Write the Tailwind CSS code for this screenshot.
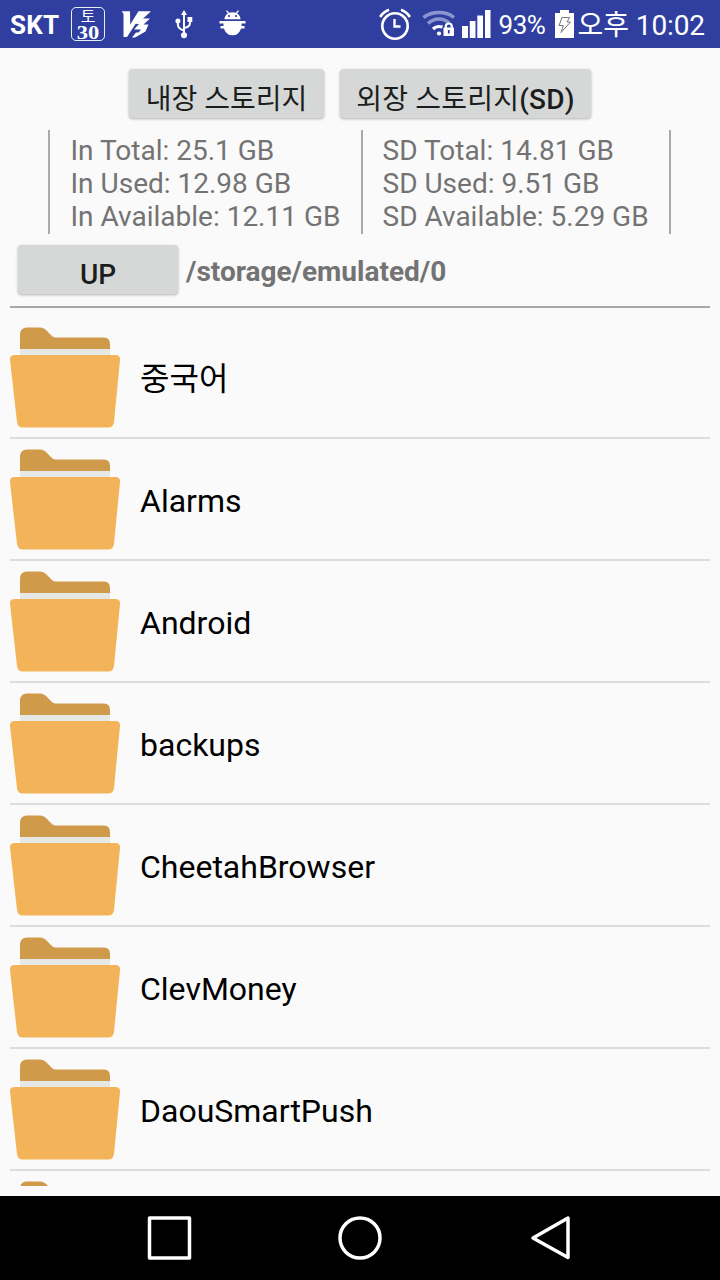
<!DOCTYPE html>
<html lang="ko">
<head>
  <meta charset="UTF-8" />
  <meta name="viewport" content="width=device-width, initial-scale=1" />
  <title>File Manager</title>
  <script src="https://cdn.jsdelivr.net/npm/@tailwindcss/browser@4"></script>
</head>
<body class="flex flex-col w-[720px] h-[1280px] overflow-hidden bg-[#fafafa] font-[Roboto,'Noto_Sans_CJK_KR',sans-serif] whitespace-nowrap">

<!-- Status bar -->
<header class="flex items-center shrink-0 h-12 pl-2.5 pr-[15px] bg-[#303f9f] text-white">
  <span class="w-[61px] text-[26px] leading-[48px] font-bold pt-0.5 tracking-[0.2px]">SKT</span>
  <div class="flex flex-col items-center w-[34px] h-[34px] shrink-0 border border-white/90 rounded-[5px]">
    <div class="h-4 text-[16px] leading-[14px] font-['Noto_Sans_CJK_KR',sans-serif]">토</div>
    <div class="h-4 text-[18px] leading-[18px] font-bold font-['Liberation_Serif',serif] scale-x-125">30</div>
  </div>
  <svg class="ml-4 shrink-0" width="32" height="28" viewBox="0 0 32 28" fill="#fff">
    <path d="M.8 1.200H9L9.200 14.500 17.500 1.200H30L21 9.500 14.500 14 6 27H2.500V4Z"/>
    <path d="M21.500 8.500H29L22.500 14.500H27.500L24.500 21.500 14 27.500H11L15 22.500H17.500L20 19.500H13L18 14H14.500Z"/>
  </svg>
  <svg class="ml-[22px] shrink-0" width="18" height="29" viewBox="0 0 18 29" fill="none" stroke="#fff" stroke-width="2">
    <path d="M9 5V24M9 20.500Q3 18.500 2.900 15V10M9 18Q15 17 15 13V9"/>
    <path d="M9 0L12 5H6Z" fill="#fff" stroke="none"/>
    <circle cx="9" cy="25.300" r="3" fill="#fff" stroke="none"/>
    <circle cx="2.900" cy="11" r="2.500" fill="#fff" stroke="none"/>
    <path d="M12.500 7H17.300V12H12.500Z" fill="#fff" stroke="none"/>
  </svg>
  <svg class="ml-[26px] shrink-0" width="27" height="28" viewBox="0 0 27 28" fill="#fff">
    <path d="M5.500 9.200A7.500 6.800 0 0 1 9 3.500L7 1 8 .2 10.200 2.800A9 9 0 0 1 16.800 2.800L19 .2 20 1 18 3.500A7.500 6.800 0 0 1 21.500 9.200Z"/>
    <path d="M.5 11H26.500V13.500H22.500V16H25.500V18.500H22A8.700 8.700 0 0 1 5 18.500H1.500V16H4.500V13.500H.5Z"/>
    <circle cx="10" cy="6" r="1.100" fill="#303f9f"/>
    <circle cx="17" cy="6" r="1.100" fill="#303f9f"/>
  </svg>

  <!-- Right side -->
  <svg class="ml-auto shrink-0" width="32" height="32" viewBox="0 0 32 32" fill="none" stroke="#fff">
    <circle cx="16" cy="18" r="12.700" stroke-width="2.600"/>
    <path d="M15.500 11V18.500H21.500" stroke-width="2.400"/>
    <path d="M1.200 9Q4 4 10 1.800M30.800 9Q28 4 22 1.800" stroke-width="2.700"/>
  </svg>
  <svg class="ml-[11px] shrink-0" width="34" height="28" viewBox="0 0 34 28" fill="none">
    <path d="M1.500 7.500Q8 2.500 17 2.500T32 7.500" stroke="#8b95cf" stroke-width="3.500"/>
    <path d="M6 13.500Q11 9 17 9T27 13" stroke="#8b95cf" stroke-width="3.500"/>
    <path d="M11 19Q13.500 16.500 17 16.500Q19 16.500 20.500 17" stroke="#fff" stroke-width="3.200"/>
    <circle cx="17" cy="23.500" r="2.100" fill="#fff"/>
    <path d="M23.800 18V16.500A3 3 0 0 1 29.800 16.500V18" stroke="#fff" stroke-width="2.200"/>
    <rect x="21.500" y="17.500" width="10.500" height="8.500" rx=".8" fill="#fff"/>
    <path d="M26.800 20V23.500" stroke="#303f9f" stroke-width="1.800"/>
  </svg>
  <svg class="ml-1.5 shrink-0" width="29" height="28" viewBox="0 0 29 28" fill="#fff">
    <path d="M0 16H6V28H0ZM7.800 11H13.500V28H7.800ZM15.300 5.500H21V28H15.300ZM23 0H28.500V28H23Z"/>
  </svg>
  <span class="ml-2 w-12 text-[26px] leading-[48px] tracking-[-0.5px] pt-0.5">93%</span>
  <svg class="ml-2 shrink-0" width="19" height="28" viewBox="0 0 19 28">
    <path d="M5 0H14V3H19V28H0V3H5Z" fill="#fff"/>
    <path d="M7 7.500H14.500L12 12H15.500L6 22.500 8.300 15.500H4Z" fill="none" stroke="#777" stroke-width="1"/>
  </svg>
  <span class="ml-1 text-[28px] leading-[48px] tracking-[-0.1px] pt-[3px]">오후 10:02</span>
</header>

<!-- Storage selection -->
<div class="flex justify-center gap-4 shrink-0 mt-[21px] h-[49px] text-[28px] text-[#1c1e1d]">
  <button class="w-[195px] h-[49px] rounded-[4px] bg-[#d6d8d7] shadow-[0_1px_3px_rgba(0,0,0,0.3)] leading-[49px] pt-1.5 overflow-hidden">내장 스토리지</button>
  <button class="w-[251px] h-[49px] rounded-[4px] bg-[#d6d8d7] shadow-[0_1px_3px_rgba(0,0,0,0.3)] leading-[49px] pt-1.5 overflow-hidden tracking-[0.2px]">외장 스토리지<span class="font-medium">(SD)</span></button>
</div>

<section class="flex shrink-0 mt-3 ml-12 w-[623px] h-[104px] border-x-2 border-[#aaa] text-[28px] leading-[33px] text-[#737373]">
  <div class="w-[313px] pl-[20.5px] pt-1 border-r-2 border-[#aaa]">
    <p>In Total: 25.1 GB</p>
    <p>In Used: 12.98 GB</p>
    <p>In Available: 12.11 GB</p>
  </div>
  <div class="pl-[19.5px] pt-1">
    <p>SD Total: 14.81 GB</p>
    <p>SD Used: 9.51 GB</p>
    <p>SD Available: 5.29 GB</p>
  </div>
</section>

<!-- Current path -->
<nav class="flex shrink-0 mx-2.5 h-[74px] pt-[11px] pl-2 border-b-2 border-[#a6a8a7]">
  <button class="w-40 h-[49px] rounded-[4px] bg-[#d6d8d7] shadow-[0_1px_3px_rgba(0,0,0,0.3)] text-[28px] leading-[49px] pt-[5px] font-medium text-[#1c1e1d]">UP</button>
  <span class="ml-2 text-[28px] leading-[53px] font-bold text-[#737373]">/storage/emulated/0</span>
</nav>

<main id="fileList" class="shrink-0 mx-2.5 mt-[9px] h-[869px] overflow-hidden"></main>

<!-- Navigation bar -->
<footer class="shrink-0 mt-2.5 h-[84px] bg-black">
  <svg width="720" height="84" viewBox="0 0 720 84" fill="none" stroke="#fff" stroke-width="3.500" stroke-linejoin="round">
    <rect x="149.500" y="22" width="40" height="40"/>
    <circle cx="360" cy="42" r="20"/>
    <path d="M533 42L568 22V61.500Z"/>
  </svg>
</footer>

<script>
  const folders = ['중국어', 'Alarms', 'Android', 'backups', 'CheetahBrowser', 'ClevMoney', 'DaouSmartPush', ''];

  document.getElementById('fileList').innerHTML = folders.map(name => `
    <div class="flex items-center h-[122px] border-b-2 border-[#dcdcdc]">
      <svg class="shrink-0" width="110" height="120" viewBox="0 0 110 120">
        <path d="M10 31V18Q10 10.500 17 10.500H30Q34 10.500 37 14L42 19Q43.500 20.500 46 20.500H94Q100 20.500 100 27V32H10Z" fill="#cf9a49"/>
        <path d="M10 32H100V40H10Z" fill="#e6e8e5"/>
        <path d="M5 38H105Q110.500 38 110 43L104 105Q103.500 110.500 98 110.500H13Q7.500 110.500 7 105L0 43Q-.5 38 5 38Z" fill="#f3b358"/>
      </svg>
      <span class="ml-5 pt-1 text-[32px] text-black">${name}</span>
    </div>
  `).join('');
</script>
</body>
</html>
